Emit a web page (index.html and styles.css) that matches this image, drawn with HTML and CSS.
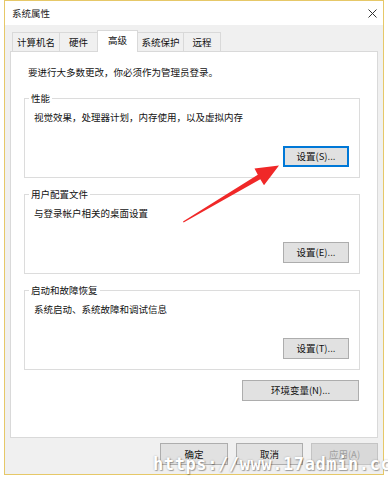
FILE: index.html
```html
<!DOCTYPE html>
<html lang="zh-CN">
<head>
<meta charset="utf-8">
<title>系统属性</title>
<link rel="stylesheet" href="styles.css">
</head>
<body>
<div class="window">
  <div class="titlebar">
    <span class="title">系统属性</span>
    <svg class="close" width="9" height="9" viewBox="0 0 9 9"><path d="M0.5 0.5 L8.5 8.5 M8.5 0.5 L0.5 8.5" stroke="#333" stroke-width="1" fill="none"/></svg>
  </div>
  <div class="body">
    <div class="tabs">
      <div class="tab t1">计算机名</div>
      <div class="tab t2">硬件</div>
      <div class="tab sel">高级</div>
      <div class="tab t4">系统保护</div>
      <div class="tab t5">远程</div>
    </div>
    <div class="panel">
      <p class="intro">要进行大多数更改，你必须作为管理员登录。</p>
      <fieldset class="group">
        <legend>性能</legend>
        <p class="desc">视觉效果，处理器计划，内存使用，以及虚拟内存</p>
        <div class="row"><button class="btn focus">设置(S)...</button></div>
      </fieldset>
      <fieldset class="group">
        <legend>用户配置文件</legend>
        <p class="desc">与登录帐户相关的桌面设置</p>
        <div class="row"><button class="btn">设置(E)...</button></div>
      </fieldset>
      <fieldset class="group">
        <legend>启动和故障恢复</legend>
        <p class="desc">系统启动、系统故障和调试信息</p>
        <div class="row"><button class="btn">设置(T)...</button></div>
      </fieldset>
      <div class="env-row"><button class="btn env">环境变量(N)...</button></div>
    </div>
    <div class="footer">
      <button class="btn fbtn ok">确定</button>
      <button class="btn fbtn">取消</button>
      <button class="btn fbtn" disabled>应用(A)</button>
    </div>
  </div>
</div>
<svg class="arrow" width="388" height="477" viewBox="0 0 388 477">
  <polygon points="183,221.5 257.8,174.8 254.5,168.6 279,165.5 264,185.2 260.3,179.2 183.6,222.4" fill="#f02828"/>
</svg>
<div class="watermark">https://www.17admin.cc</div>
</body>
</html>
```
FILE: styles.css
```css
html, body {
  margin: 0;
  padding: 0;
  background: #ffffff;
}
body {
  width: 388px;
  height: 477px;
  overflow: hidden;
  font-family: "Noto Sans CJK SC", "Noto Sans", sans-serif;
  font-size: 9.5px;
  color: #111;
}
.window {
  width: 378px;
  height: 473px;
  margin-left: 4px;
  border: 1px solid #e6c868;
  background: #f0f0f0;
  display: flex;
  flex-direction: column;
}
.titlebar {
  height: 24px;
  background: #ffffff;
  display: flex;
  align-items: center;
  justify-content: space-between;
  padding: 0 6px 0 7px;
}
.title {
  line-height: 13px;
  color: #222;
}
.close {
  display: block;
}
.body {
  flex: 1;
  padding: 7px 5px 0 5px;
  display: flex;
  flex-direction: column;
}
.tabs {
  display: flex;
  height: 19px;
  margin-left: 2px;
}
.tab {
  box-sizing: border-box;
  height: 19px;
  border: 1px solid #d9d9d9;
  border-bottom: none;
  display: flex;
  align-items: center;
  justify-content: center;
  padding-top: 1px;
  line-height: 13px;
  background: #f0f0f0;
}
.t1 { width: 48px; }
.t2 { width: 39px; margin-left: -1px; }
.sel {
  width: 41px;
  margin-left: -1px;
  margin-top: -2px;
  height: 22px;
  background: #ffffff;
  position: relative;
  z-index: 1;
  padding-top: 0;
  padding-bottom: 2px;
}
.t4 { width: 47px; margin-left: -1px; }
.t5 { width: 38px; margin-left: -1px; }
.panel {
  box-sizing: border-box;
  height: 387px;
  border: 1px solid #d9d9d9;
  background: #ffffff;
  padding: 14px 0 0 13px;
}
.intro {
  margin: 0 0 13px 4px;
  line-height: 13px;
}
.group {
  box-sizing: border-box;
  width: 336px;
  margin: 0 0 10px 0;
  padding: 0 0 10px 0;
  border: 1px solid #dcdcdc;
  min-width: 0;
}
.group legend {
  margin-left: 4px;
  padding: 0 2px;
  line-height: 13px;
}
.desc {
  margin: 6px 0 0 9px;
  line-height: 13px;
}
.row {
  margin-top: 22px;
  display: flex;
  justify-content: flex-end;
  padding-right: 10px;
}
.btn {
  box-sizing: border-box;
  height: 21px;
  width: 66px;
  padding: 0;
  background: #e1e1e1;
  border: 1px solid #adadad;
  font-family: "Noto Sans CJK SC", "Noto Sans", sans-serif;
  font-size: 9.5px;
  line-height: 13px;
  color: #111;
}
.focus {
  border: 1px solid #0078d7;
  box-shadow: inset 0 0 0 1px #0078d7;
}
.env-row {
  width: 335px;
  margin-top: 5px;
  display: flex;
  justify-content: flex-end;
}
.env {
  width: 117px;
}
.footer {
  margin-top: 5px;
  display: flex;
  justify-content: flex-end;
  gap: 8px;
}
.fbtn {
  width: 67px;
  height: 22px;
}
.fbtn.ok {
  width: 68px;
}
.fbtn:disabled {
  background: #d9d9d9;
  border-color: #c4c4c4;
  color: #a0a0a0;
}
.arrow {
  position: absolute;
  left: 0;
  top: 0;
  pointer-events: none;
}
.watermark {
  position: absolute;
  left: 153px;
  top: 456px;
  font-family: "DejaVu Sans Mono", "Liberation Mono", monospace;
  font-weight: bold;
  font-size: 17px;
  line-height: 17px;
  letter-spacing: 0.6px;
  color: #ffffff;
  white-space: nowrap;
  text-shadow: 1px 1px 1px rgba(0,0,0,0.3), 0 0 2px rgba(0,0,0,0.25);
}
```
